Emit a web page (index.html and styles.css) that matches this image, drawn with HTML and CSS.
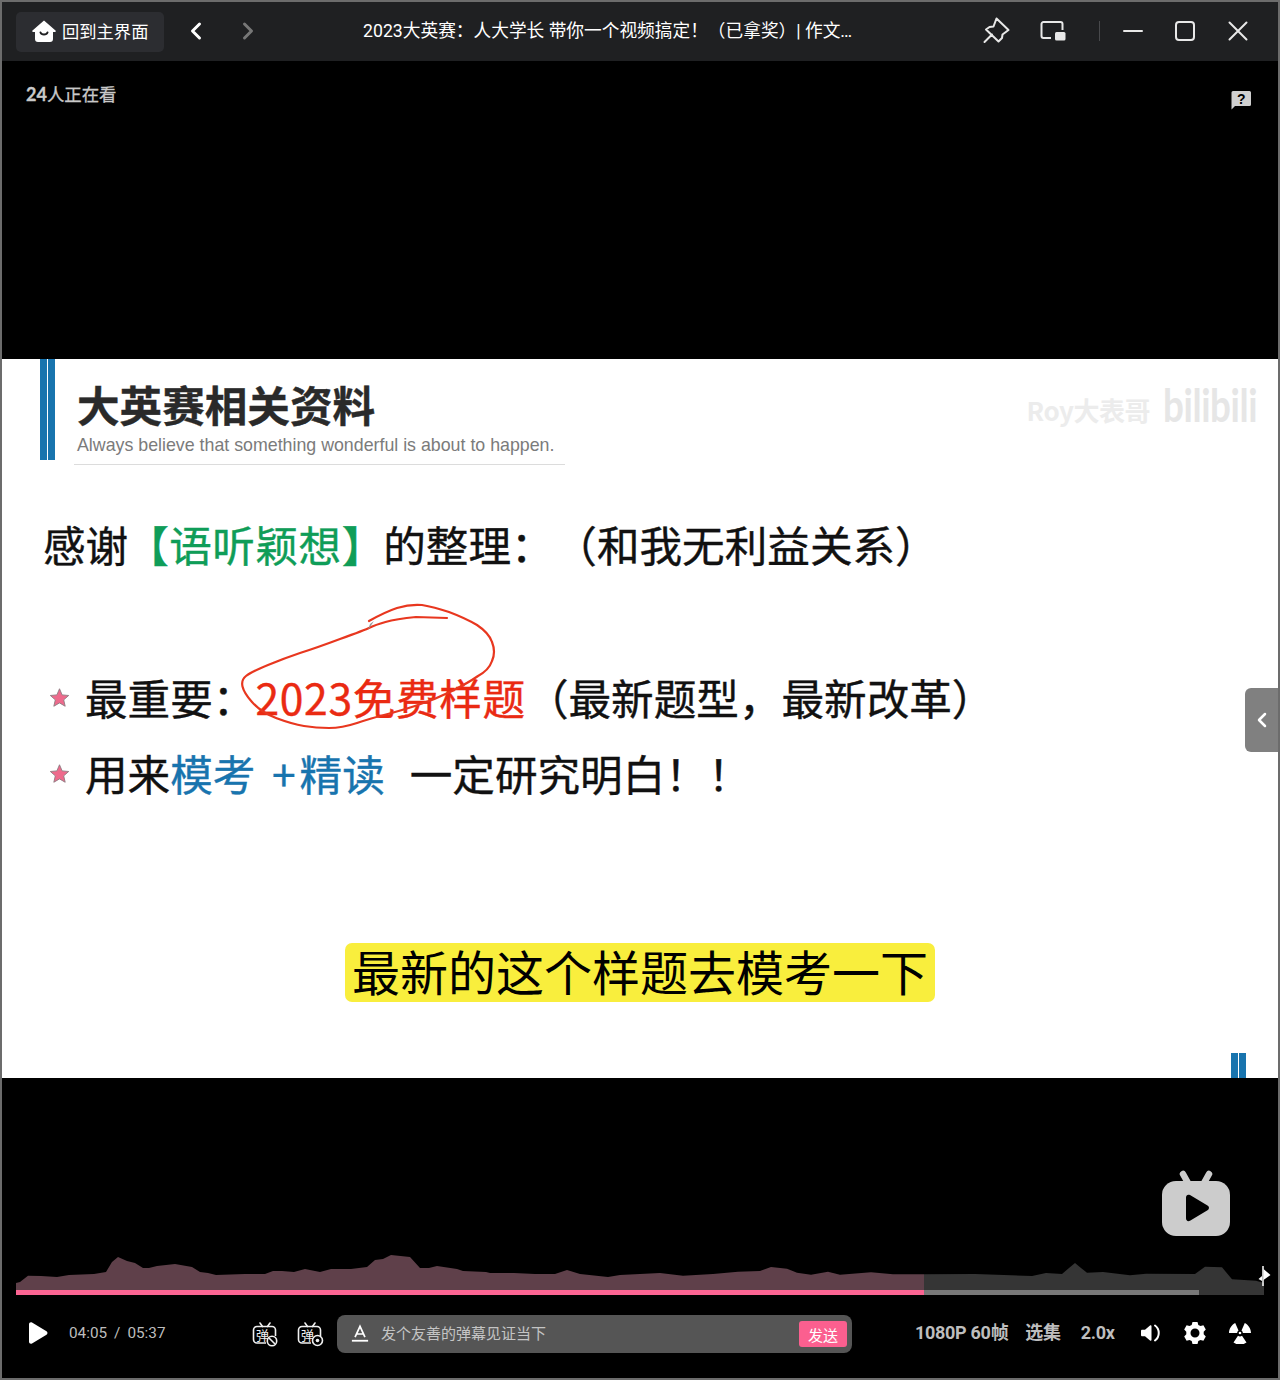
FILE: index.html
```html
<!DOCTYPE html>
<html lang="zh-CN">
<head>
<meta charset="utf-8">
<title>2023大英赛</title>
<link rel="stylesheet" href="styles.css">
</head>
<body>
<div class="window">
  <header class="titlebar">
    <button class="home-btn">
      <svg class="home-icon" width="24" height="24" viewBox="0 0 24 24"><path d="M12 1.500 23.500 11.500c.6.7.2 1.600-.7 1.600H21V20a3 3 0 0 1-3 3H6a3 3 0 0 1-3-3v-6.900H1.200c-.9 0-1.300-.9-.7-1.600Z" fill="#fff"/><path d="M8.500 13.500c1 2.600 6 2.600 7 0" fill="none" stroke="#1f2022" stroke-width="2" stroke-linecap="round"/></svg>
      <span>回到主界面</span>
    </button>
    <svg class="nav nav-back" width="14" height="20" viewBox="0 0 14 20"><path d="M10.500 3 3.500 10l7 7" fill="none" stroke="#fff" stroke-width="3" stroke-linecap="round" stroke-linejoin="round"/></svg>
    <svg class="nav nav-fwd" width="14" height="20" viewBox="0 0 14 20"><path d="M3.500 3l7 7-7 7" fill="none" stroke="#777" stroke-width="3" stroke-linecap="round" stroke-linejoin="round"/></svg>
    <div class="title">2023大英赛：人大学长 带你一个视频搞定！（已拿奖）| 作文…</div>
    <div class="win-tools">
      <svg class="pin" width="28" height="28" viewBox="0 0 28 28"><path d="M13.500 2.500 25.500 14l-6 4.500-.5 3.500-3.500 3.500L3 13.500l3.500-2.500 4-.5ZM9 18.500l-7.500 7.500" fill="none" stroke="#e8e8e8" stroke-width="2" stroke-linejoin="round" stroke-linecap="round"/></svg>
      <svg class="pip" width="26" height="22" viewBox="0 0 26 22"><path d="M11 18H3.500A2 2 0 0 1 1.500 16V4a2 2 0 0 1 2-2h17a2 2 0 0 1 2 2v6" fill="none" stroke="#e8e8e8" stroke-width="2"/><rect x="15" y="12" width="10.500" height="8.500" rx="1.500" fill="#e8e8e8"/></svg>
      <i class="divider"></i>
      <svg class="win-min" width="22" height="4" viewBox="0 0 22 4"><rect y="1" width="20" height="2" rx="1" fill="#e8e8e8"/></svg>
      <svg class="win-max" width="20" height="20" viewBox="0 0 20 20"><rect x="1" y="1" width="18" height="18" rx="3" fill="none" stroke="#e8e8e8" stroke-width="2"/></svg>
      <svg class="win-close" width="20" height="20" viewBox="0 0 20 20"><path d="M1.500 1.500l17 17M18.500 1.500l-17 17" stroke="#e8e8e8" stroke-width="2" stroke-linecap="round"/></svg>
    </div>
  </header>

  <main class="video">
    <section class="band-top">
      <div class="viewers"><b>24</b>人正在看</div>
      <svg class="help" width="22" height="20" viewBox="0 0 22 20"><path d="M3 1h16.500A1.500 1.500 0 0 1 21 2.500v12a1.500 1.500 0 0 1-1.500 1.500H5L1.500 19.500V2.500A1.500 1.500 0 0 1 3 1Z" fill="#d0d0d0"/><text x="11.200" y="13.500" class="help-q">?</text></svg>
    </section>

    <section class="slide">
      <div class="slide-head">
        <div class="stripes"><i></i><i></i></div>
        <div class="head-text">
          <h1>大英赛相关资料</h1>
          <p>Always believe that something wonderful is about to happen.</p>
        </div>
        <div class="watermark"><span class="wm-roy">Roy大表哥</span><span class="wm-bili">bilibili</span></div>
      </div>

      <div class="lead">感谢<span class="green">【语听颖想】</span>的整理：<span class="aside">（和我无利益关系）</span></div>

      <div class="point point-a">
        <svg class="star" width="21" height="21" viewBox="0 0 24 24"><path d="M12 2l3 7 7.500.7-5.700 5 1.700 7.300L12 18.200 5.500 22l1.700-7.300-5.700-5L9 9Z" fill="#ee6a8c" stroke="#8c7a80" stroke-width="1"/></svg>
        <span>最重要：<span class="red">2023免费样题</span>（最新题型，最新改革）</span>
      </div>
      <div class="point point-b">
        <svg class="star" width="21" height="21" viewBox="0 0 24 24"><path d="M12 2l3 7 7.500.7-5.700 5 1.700 7.300L12 18.200 5.500 22l1.700-7.300-5.700-5L9 9Z" fill="#ee6a8c" stroke="#8c7a80" stroke-width="1"/></svg>
        <span>用来<span class="blue">模考 <span class="plus">+</span>精读</span><span class="after-blue">一定研究明白！！</span></span>
      </div>

      <div class="subtitle">最新的这个样题去模考一下</div>
      <div class="stripes stripes-end"><i></i><i></i></div>

      <svg class="ink" width="1276" height="719" viewBox="2 359 1276 719"><path d="M447 618 L416 617 Q396 619 385.500 622 Q375 625 370 627.500 Q365 630 340 639 Q316 648 300 653 Q285 658 268 665 Q251 672 246 676 Q241 680 242.500 686.500 Q244 693 252 702 Q261 712 276 718 Q292 724 304 726 Q316 728 329 728 Q342 728 357 723 Q372 718 384 715 Q396 712 415 706 Q434 700 451 691.500 Q468 683 478 676 Q489 670 492 661 Q496 652 492 642 Q489 633 477 625 Q465 618 449 612 Q434 607 422 605 Q410 604 397 608 Q385 612 369 621" fill="none" stroke="#e8371f" stroke-width="2.200" stroke-linecap="round"/><path d="M374 621l-6 9 2-6z" fill="#999"/></svg>
      <button class="side-tab"><svg width="12" height="18" viewBox="0 0 12 18"><path d="M9 3 3 9l6 6" fill="none" stroke="#fff" stroke-width="2.500" stroke-linecap="round" stroke-linejoin="round"/></svg></button>
    </section>

    <section class="band-bottom">
      <svg class="tv-logo" width="68" height="66" viewBox="0 0 68 66"><path d="M21 4l5 9M47 4l-5 9" stroke="#ccc" stroke-width="6.500" stroke-linecap="round"/><rect x="0" y="11" width="68" height="55" rx="14" fill="#ccc"/><path d="M24 27.500c0-2.500 2-3.500 4-2.400l17.500 10.400c2 1.200 2 3.500 0 4.700L28 50.700c-2 1.100-4 .1-4-2.400Z" fill="#000"/></svg>
      <div class="timeline">
        <svg class="wave" width="1248" height="40" viewBox="16 1250 1248 40">
          <path fill="#5f404a" d="M16 1290V1283 L20 1282 L28 1275.700 L41 1276 L57 1277 L69 1275 L94 1274 L106 1272 L112 1262 L118 1257 L127 1261 L135 1263 L143 1268 L149 1268 L157 1266 L175 1264 L192 1267 L200 1272 L208 1273 L216 1275 L245 1274 L265 1274 L273 1271 L282 1271 L294 1272 L305 1269 L320 1272 L331 1269 L351 1269 L367 1267 L375 1260 L383 1259 L391 1255 L410 1257 L420 1268 L429 1268 L437 1266 L457 1269 L463 1271 L486 1272 L490 1273 L514 1273 L535 1274 L555 1274 L567 1270 L580 1274 L608 1277 L620 1275 L640 1274 L660 1273 L683 1275.700 L713 1274 L738 1271.700 L760 1271 L771 1267 L787 1268.700 L797 1272.700 L811 1274.700 L828 1271.700 L840 1274.700 L871 1272.300 L893 1274.300 L924 1274.300 V1290Z"/>
          <path fill="#353535" d="M924 1290V1274.300 L975 1274 L1032 1276 L1046 1273 L1062 1274 L1069 1268 L1075 1263 L1081 1268 L1087 1272.700 L1103 1272 L1130 1275.300 L1146 1273.700 L1195 1274 L1205 1266.700 L1222 1267.300 L1232 1279.300 L1244 1280 L1256 1280.700 L1264 1283 V1290Z"/>
        </svg>
        <div class="bar"><i class="bar-played"></i><i class="bar-buffered"></i><i class="bar-rest"></i></div>
        <svg class="cursor" width="14" height="24" viewBox="0 0 14 24"><path d="M6 2v20" stroke="#fff" stroke-width="1.500"/><path d="M6.500 5l7 6-7 5zM5 12l-3.500 3L5 17z" fill="#fff"/></svg>
      </div>
      <div class="controls">
        <svg class="play" width="20" height="24" viewBox="0 0 20 24"><path d="M1 3.200C1 1.500 2.700.7 4 1.500l14.500 8.800c1.300.8 1.300 2.600 0 3.400L4 22.500c-1.300.8-3 0-3-1.700Z" fill="#fff"/></svg>
        <div class="time">04:05<span class="slash">/</span>05:37</div>
        <svg class="dm dm-a" width="26" height="27" viewBox="0 0 26 27"><path d="M8 3l2.500 3.500M18 3l-2.500 3.500" stroke="#f0f0f0" stroke-width="1.600" stroke-linecap="round"/><path d="M14 23H5a3.500 3.500 0 0 1-3.500-3.500V10A3.500 3.500 0 0 1 5 6.500h15A3.500 3.500 0 0 1 23.500 10v6" fill="none" stroke="#f0f0f0" stroke-width="1.600"/><text x="10.500" y="20" class="dm-text">弹</text><circle cx="20" cy="21" r="4.700" fill="#000" stroke="#f0f0f0" stroke-width="1.600"/><path d="M17 18l6 6" stroke="#f0f0f0" stroke-width="1.600"/></svg>
        <svg class="dm dm-b" width="27" height="27" viewBox="0 0 27 27"><path d="M8 3l2.500 3.500M18 3l-2.500 3.500" stroke="#f0f0f0" stroke-width="1.600" stroke-linecap="round"/><path d="M14 23H5a3.500 3.500 0 0 1-3.500-3.500V10A3.500 3.500 0 0 1 5 6.500h15A3.500 3.500 0 0 1 23.500 10v6" fill="none" stroke="#f0f0f0" stroke-width="1.600"/><text x="10.500" y="20" class="dm-text">弹</text><circle cx="20.500" cy="20.500" r="5" fill="#000" stroke="#f0f0f0" stroke-width="1.600"/><circle cx="20.500" cy="20.500" r="1.800" fill="#f0f0f0"/></svg>
        <div class="dm-input">
          <svg class="dm-a-icon" width="18" height="20" viewBox="0 0 20 20"><path d="M4.500 13.500 10 1.500l5.500 12M6.300 10h7.400" fill="none" stroke="#fff" stroke-width="1.900"/><rect x="1" y="16.500" width="18" height="2" fill="#fff"/></svg>
          <span class="dm-placeholder">发个友善的弹幕见证当下</span>
          <button class="send">发送</button>
        </div>
        <span class="ctl ctl-q">1080P 60帧</span>
        <span class="ctl ctl-s">选集</span>
        <span class="ctl ctl-r">2.0x</span>
        <svg class="vol" width="22" height="20" viewBox="0 0 22 20"><path d="M1 8c0-.8.500-1.300 1.300-1.300H5L10 2.500c.8-.6 1.500-.3 1.500.7v13.600c0 1-.7 1.300-1.500.7L5 13.300H2.300C1.500 13.300 1 12.800 1 12Z" fill="#fff"/><path d="M15 2.500c5 3.700 5 11.300 0 15" fill="none" stroke="#fff" stroke-width="2" stroke-linecap="round"/></svg>
        <svg class="gear" width="24" height="24" viewBox="0 0 24 24"><path fill="#fff" fill-rule="evenodd" d="M9.500 1h5l.8 2.900 2.200 1.200 2.900-.8 2.400 4.300-2.100 2.100v2.600l2.100 2.100-2.400 4.300-2.900-.8-2.200 1.200-.8 2.900h-5l-.8-2.900-2.200-1.200-2.900.8-2.400-4.300 2.100-2.100v-2.600L1.200 8.600l2.400-4.300 2.900.8 2.200-1.200ZM12 7.500a4.500 4.500 0 1 0 0 9 4.500 4.500 0 0 0 0-9Z"/></svg>
        <svg class="radiation" width="24" height="22" viewBox="0 0 24 22"><path fill="#fff" d="M7.200 1 10.500 8.500a3.500 3.500 0 0 0-1.400 2.400H1C1 6.800 3.500 3 7.200 1ZM16.800 1c3.700 2 6.200 5.800 6.200 9.900h-8.100a3.500 3.500 0 0 0-1.400-2.400ZM10 13.700a3.500 3.500 0 0 0 4 0l4.500 6.800a11.500 11.500 0 0 1-13 0Z"/><circle cx="12" cy="11" r="1.300" fill="#fff"/></svg>
      </div>
    </section>
  </main>
</div>
</body>
</html>
```

FILE: styles.css
```css
* { box-sizing: border-box; }
html, body { margin: 0; padding: 0; background: #000; }
body { font-family: "Noto Sans CJK SC", "Noto Sans", sans-serif; }
i { display: block; }
button { font: inherit; border: 0; padding: 0; }

.window { width: 1280px; height: 1380px; border: 2px solid #6c6c6c; display: flex; flex-direction: column; overflow: hidden; }

/* title bar */
.titlebar { height: 59px; flex: none; background: #1f2022; display: flex; align-items: center; padding: 0 0 2px 14px; }
.home-btn { width: 148px; height: 40px; margin-top: 2px; background: #2c2d31; color: #fff; border-radius: 5px; display: flex; align-items: center; padding: 0 0 2px 16px; gap: 6px; font-size: 17.300px; font-family: "Roboto", "Noto Sans CJK SC", sans-serif; }
.nav { flex: none; }
.nav-back { margin-left: 25px; }
.nav-fwd { margin-left: 38px; }
.title { margin-left: 108px; width: 500px; color: #fff; font-size: 17.700px; line-height: 24px; white-space: nowrap; font-family: "Roboto", "Noto Sans CJK SC", sans-serif; }
.win-tools { display: flex; align-items: center; margin-left: auto; padding-right: 30px; }
.pin { margin-top: -1px; }
.pip { margin-left: 29px; margin-top: 1px; }
.divider { width: 1px; height: 20px; background: #48494c; margin-left: 33px; }
.win-min { margin-left: 23px; }
.win-max { margin-left: 30px; }
.win-close { margin-left: 33px; }

/* video */
.video { flex: 1; display: flex; flex-direction: column; background: #000; }
.band-top { height: 298px; flex: none; display: flex; justify-content: space-between; align-items: flex-start; padding: 19px 26px 0 24px; }
.viewers { color: #c9c9c9; font-size: 17.400px; line-height: 28px; -webkit-text-stroke: 0.3px #c9c9c9; }
.viewers b { font-family: "Lato", "Noto Sans", sans-serif; font-weight: 700; font-size: 18px; }
.help { margin-top: 10px; }
.help-q { font: 700 14px "Liberation Sans", sans-serif; fill: #000; text-anchor: middle; }

/* slide */
.slide { position: relative; height: 719px; flex: none; background: #fff; display: flex; flex-direction: column; color: #111; font-size: 42.600px; line-height: 56px; -webkit-text-stroke: 0.4px currentColor; }
.slide-head { display: flex; height: 106px; flex: none; }
.stripes { display: flex; gap: 1px; width: 15px; height: 101px; margin-left: 38px; flex: none; }
.stripes i { flex: 1; background: #1874ae; }
.stripes-end { height: 25px; margin: 51px 32px 0 auto; }
.head-text { width: 491px; margin-left: 19px; padding-left: 3px; border-bottom: 1.500px solid #dcdcdc; }
.head-text h1 { margin: 17px 0 0; font-size: 42.600px; line-height: 56px; font-weight: 700; color: #2a2a2a; }
.head-text p { margin: 2px 0 0; font: 17.800px/22px "Liberation Sans", sans-serif; color: #7b7b7b; white-space: nowrap; -webkit-text-stroke: 0; }
.watermark { margin-left: auto; margin-right: 22px; display: flex; align-items: center; height: 92px; color: #ececec; -webkit-text-stroke: 0; }
.wm-roy { font: 700 26px/30px "Noto Sans CJK SC", sans-serif; letter-spacing: -0.500px; margin-top: 9px; }
.wm-bili { display: inline-block; width: 93px; font: 700 46px/50px "Lato", sans-serif; margin-left: 13px; letter-spacing: -0.500px; color: #e6e6e6; transform: scaleX(0.8); transform-origin: 0 50%; }
.lead { margin: 51px 0 0 41px; height: 60px; white-space: nowrap; }
.green { color: #0f9d58; letter-spacing: 0.500px; margin: 0 -1.500px 0 -2px; }
.aside { margin-left: 22px; }
.point { display: flex; align-items: center; white-space: nowrap; height: 60px; padding: 0 0 0 46px; flex: none; }
.point > span { margin-top: -5px; }
.point-a { margin-top: 93px; }
.point-b { margin-top: 16px; }
.star { flex: none; margin-right: 15px; margin-left: 1px; margin-top: -3px; }
.red { color: #ea2a12; letter-spacing: 0.700px; }
.blue { color: #1874ae; margin-right: 25px; }
.plus { margin: 0 4px 0 7px; }
.subtitle { margin: 138px auto 0; width: 590px; height: 59px; background: #f9ee3d; border-radius: 7px; color: #000; font-size: 48px; line-height: 55px; text-align: center; white-space: nowrap; -webkit-text-stroke: 0; }
.ink { position: absolute; left: 0; top: 0; pointer-events: none; }
.side-tab { position: absolute; right: 0; top: 329px; width: 33px; height: 64px; background: #808080; border-radius: 6px 0 0 6px; display: flex; align-items: center; justify-content: center; }

/* bottom band */
.band-bottom { flex: 1; position: relative; display: flex; flex-direction: column; padding-top: 92px; }
.tv-logo { align-self: flex-end; margin-right: 48px; flex: none; }
.timeline { position: relative; margin: 14px 14px 0; height: 45px; flex: none; }
.wave { display: block; }
.bar { display: flex; height: 5px; }
.bar-played { width: 908px; background: #fb6492; }
.bar-buffered { width: 275px; background: #787878; }
.bar-rest { flex: 1; background: #353535; }
.cursor { position: absolute; right: -7px; top: 14px; }

.controls { display: flex; align-items: center; height: 76px; padding-left: 26px; }
.play { flex: none; }
.time { margin-left: 21px; width: 97px; color: #bdbdbd; font: 15.300px/20px "Roboto", sans-serif; white-space: nowrap; }
.slash { margin: 0 7px; }
.dm { flex: none; }
.dm-a { margin-left: 86px; }
.dm-b { margin-left: 19px; }
.dm-text { font-size: 13px; fill: #f0f0f0; text-anchor: middle; }
.dm-input { margin: 2px 0 0 13px; width: 515px; height: 38px; background: #555; border-radius: 8px; display: flex; align-items: center; padding-left: 14px; flex: none; }
.dm-placeholder { margin-left: 12px; padding-bottom: 4px; color: #c4c4c4; font-size: 15px; }
.send { margin-left: auto; margin-right: 5px; width: 48px; height: 26px; background: #fb5f8f; color: #fff; font-size: 15px; line-height: 25px; border-radius: 3px; }
.ctl { color: #bdbdbd; font: 700 18px/24px "Roboto", "Noto Sans CJK SC", sans-serif; white-space: nowrap; letter-spacing: -0.300px; }
.ctl-q { margin-left: 63px; }
.ctl-s { margin-left: 17px; }
.ctl-r { margin-left: 20px; }
.vol { margin-left: 25px; flex: none; }
.gear { margin-left: 21px; flex: none; }
.radiation { margin-left: 21px; flex: none; }
```
